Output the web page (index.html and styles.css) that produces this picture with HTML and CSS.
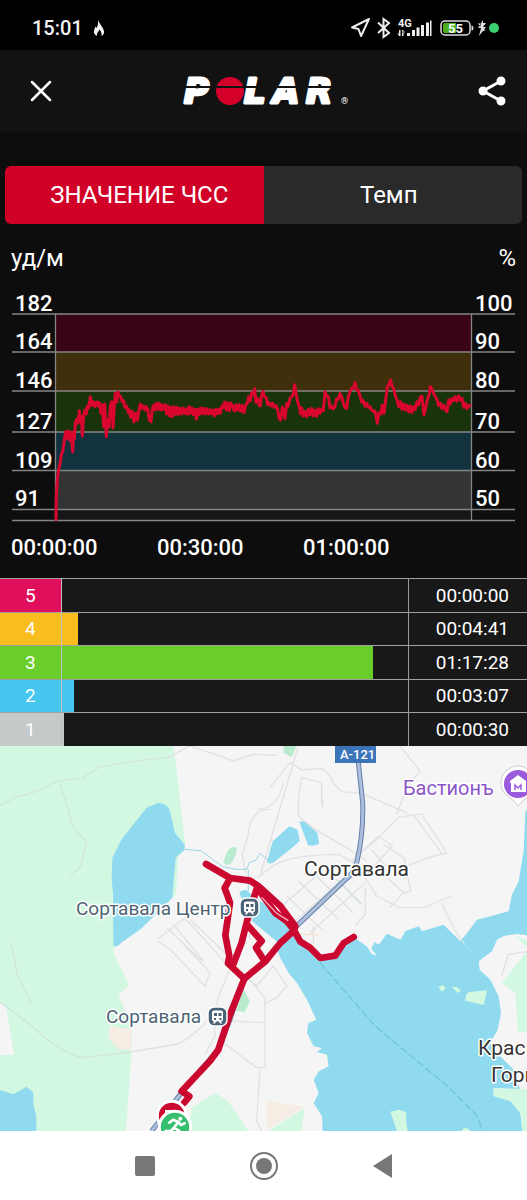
FILE: index.html
```html
<!DOCTYPE html>
<html lang="ru">
<head>
<meta charset="utf-8">
<meta name="viewport" content="width=device-width, initial-scale=1">
<title>Polar</title>
<link rel="stylesheet" href="styles.css">
</head>
<body>
<div class="status">
  <span class="clock">15:01</span>
  <svg class="flame" width="12" height="18" viewBox="0 0 12 18"><path fill="#f2f2f2" d="M5 1C6 4 10 8 11 12c.5 2-.5 4-2.500 5 .5-2.500-.5-4.500-2-6.500C5.500 13 3.500 14 4 17 1.500 16 .5 14 1 11.500 1.500 10 2 9 2.500 7.500L3.800 9C5 6.500 5.300 4 5 1z"/></svg>
  <svg class="indicators" width="150" height="24" viewBox="0 0 150 24">
    <path d="M2 11.500L19 3l-8 17-2.500-7z" fill="none" stroke="#eee" stroke-width="2" stroke-linejoin="round"/>
    <path d="M28 6.500l11 10.500-5.500 4V3l5.500 4-11 10" fill="none" stroke="#eee" stroke-width="2"/>
    <text class="net" x="48" y="11">4G</text>
    <path fill="#eee" d="M49 14h1.500v6H49zM52 14h1.500v6H52zM47.500 17.500h3L49 20zM52 16.500h3L53.500 14zM57 17h3v3h-3zM62 14h3v6h-3zM66.500 11.500h3V20h-3zM71 9h3v11h-3zM76 6.500h3V20h-3zM80 4.500h1.500V20H80z"/>
    <rect x="91" y="5" width="29" height="14" rx="4" fill="none" stroke="#ddd" stroke-width="1.500"/>
    <path fill="#4caf1e" d="M95 7h11v10H95a2 2 0 0 1-2-2V9a2 2 0 0 1 2-2z"/><path fill="#ddd" d="M121.500 9.500q2 0 2 2.500t-2 2.500z"/>
    <text class="battery" x="98" y="17">55</text>
    <path fill="#ddd" d="M133 4l-5 8h3l-2 8 7-9h-3l3-4h-3zM128 7l3 1-1 3zM136 14l-4-1-1 3z"/>
    <circle cx="144" cy="12" r="5" fill="#3bd16f"/>
  </svg>
</div>
<header class="header">
  <button class="icon-button" aria-label="Закрыть"><svg width="22" height="22" viewBox="0 0 22 22"><path d="M2 2l18 18M20 2L2 20" stroke="#fff" stroke-width="2.500" stroke-linecap="round"/></svg></button>
  <svg class="logo" width="180" height="56" viewBox="0 0 180 56">
    <g class="wordmark"><text x="7" y="40">P</text><text x="67" y="40">L</text><text x="96" y="40">A</text><text x="129" y="40">R</text></g>
    <circle cx="53" cy="28" r="14" fill="#d4002a"/>
    <path d="M0 24h180" stroke="#121212" stroke-width="2"/>
    <text class="reg" x="164" y="41">®</text>
  </svg>
  <button class="icon-button" aria-label="Поделиться"><svg width="28" height="30" viewBox="0 0 28 30"><g fill="#fff" stroke="#fff" stroke-width="3"><path d="M23 5L5 15l18 10" fill="none"/><circle cx="5" cy="15" r="3"/><circle cx="23" cy="5" r="3"/><circle cx="23" cy="25" r="3"/></g></svg></button>
</header>
<main>
<div class="tabs">
  <button class="tab active">ЗНАЧЕНИЕ ЧСС</button>
  <button class="tab">Темп</button>
</div>
<div class="units"><span>уд/м</span><span>%</span></div>
<svg class="chart" viewBox="0 0 527 298" role="img" aria-label="График ЧСС">
  <rect x="56" y="34" width="415" height="38" fill="#390318"/>
  <rect x="56" y="72" width="415" height="39" fill="#3f2f0b"/>
  <rect x="56" y="111" width="415" height="41" fill="#19330d"/>
  <rect x="56" y="152" width="415" height="38" fill="#12323d"/>
  <rect x="56" y="190" width="415" height="40" fill="#333434"/>
  <rect x="56" y="230" width="415" height="10" fill="#161616"/>
  <path d="M12 34h503M12 72h503M12 111h503M12 152h503M12 190.500h503M12 229.500h503M12 240.500h503M55.500 34v206M471.500 34v206" fill="none" stroke="#858585" stroke-width="1.300"/>
  <g class="axis">
    <text x="15" y="31">182</text><text x="15" y="69">164</text><text x="15" y="108">146</text><text x="15" y="149">127</text><text x="15" y="188">109</text><text x="15" y="226">91</text>
    <text x="475" y="31">100</text><text x="475" y="69">90</text><text x="475" y="108">80</text><text x="475" y="149">70</text><text x="475" y="188">60</text><text x="475" y="226">50</text>
    <text x="11" y="275">00:00:00</text><text x="157" y="275">00:30:00</text><text x="303" y="275">01:00:00</text>
  </g>
  <g transform="scale(.33333)">
    <polyline fill="none" stroke="#d9062f" stroke-width="9" stroke-linejoin="round" points="168,722 169,650 172,595 176,570 180,550 184,525 189,510 193,480 197,455 200,475 204,453 208,480 211,456 214,475 218,515 221,455 223,477 226,430 230,418 233,430 238,392 241,425 244,410 247,468 251,405 255,390 259,402 262,378 266,384 271,350 275,376 280,365 284,380 290,366 294,378 298,368 303,400 307,375 311,440 314,372 319,470 323,420 327,440 331,378 335,365 339,444 343,380 346,340 351,365 354,336 358,348 362,350 367,365 371,362 375,382 380,378 385,398 389,390 392,412 397,395 402,426 407,400 412,420 416,395 421,372 425,385 430,378 435,390 439,380 443,387 448,420 453,425 457,385 461,376 465,390 469,370 474,388 478,370 483,390 487,375 491,388 495,374 500,402 504,378 509,408 513,382 517,410 522,380 526,403 531,382 535,404 540,385 545,402 549,384 554,400 558,387 562,403 567,380 571,400 576,384 580,404 585,388 589,417 593,388 598,404 602,384 607,400 611,385 615,402 620,386 625,402 630,389 634,402 639,390 643,408 648,388 652,402 657,387 661,400 666,378 670,382 674,366 679,390 684,368 688,392 693,370 698,378 703,393 708,375 712,390 717,374 722,394 727,376 732,398 737,375 742,370 746,350 751,362 755,338 760,345 764,326 768,367 773,355 777,375 781,378 785,345 789,334 794,350 799,354 803,374 808,368 813,378 818,370 823,382 828,377 833,388 837,415 842,420 847,382 851,390 855,416 860,370 865,378 870,355 875,350 879,345 884,314 889,345 893,366 898,380 902,402 906,385 910,408 915,395 920,410 925,388 930,405 935,385 940,408 945,390 950,409 955,386 960,400 965,387 970,392 975,335 980,348 985,350 990,384 995,378 1000,387 1005,380 1010,356 1015,358 1020,340 1025,350 1030,370 1035,383 1040,385 1045,350 1050,335 1055,325 1060,325 1065,308 1070,330 1075,332 1080,347 1085,366 1090,362 1095,379 1100,370 1105,382 1110,380 1115,390 1120,395 1125,393 1132,430 1137,398 1142,402 1147,376 1152,400 1157,360 1162,320 1168,312 1171,300 1176,318 1181,325 1186,348 1191,360 1196,380 1201,365 1206,388 1211,372 1216,390 1221,375 1226,396 1231,378 1236,398 1241,380 1246,388 1251,365 1256,375 1261,350 1266,349 1272,405 1277,383 1282,360 1287,345 1291,320 1296,328 1301,340 1306,350 1311,358 1316,377 1321,370 1326,386 1331,375 1336,388 1341,395 1346,360 1351,372 1356,356 1361,362 1366,350 1371,364 1376,348 1381,360 1386,355 1391,382 1396,370 1401,386 1406,376 1414,378"/>
  </g>
</svg>
<table class="zones">
  <tr><th scope="row" class="z5">5</th><td class="track"><div class="bar z5" style="width:0%"></div></td><td class="time">00:00:00</td></tr>
  <tr><th scope="row" class="z4">4</th><td class="track"><div class="bar z4" style="width:4.7%"></div></td><td class="time">00:04:41</td></tr>
  <tr><th scope="row" class="z3">3</th><td class="track"><div class="bar z3" style="width:90%"></div></td><td class="time">01:17:28</td></tr>
  <tr><th scope="row" class="z2">2</th><td class="track"><div class="bar z2" style="width:3.7%"></div></td><td class="time">00:03:07</td></tr>
  <tr><th scope="row" class="z1">1</th><td class="track"><div class="bar z1" style="width:0.7%"></div></td><td class="time">00:00:30</td></tr>
</table>
<svg class="map" viewBox="0 0 527 385" role="img" aria-label="Маршрут на карте">
  <rect width="527" height="385" fill="#f5f5f5"/>
  <g transform="scale(.33333)">
    <path fill="#d3f8e2" d="M0 0H520L532 90 555 290 535 330 528 445 345 605 340 620 388 718 355 745 370 780 395 840V910L378 1155H0V926H42L18 780 0 768z"/>
    <path fill="#f5f5f5" d="M0 768L14 780 42 926H0z"/>
    <path fill="#f5ede3" d="M328 840l66 10v60l-36 2-32-35zM800 1065l115 17-115 70z"/>
    <path fill="#d3f8e2" d="M575 1085l70-44 40 25 60 90H565zM805 1155l110-70-12 70z"/>
    <path fill="#b9eccf" d="M680 320q12-22 30-15 2 20-15 45-15 12-25 0zM850 0h39l-14 34-24-14zM730 730l20 35-16 34-26-5z"/>
    <path fill="#8fdaee" d="M474 171q28 0 36 25l15 65 30 36-2 16-26 22-10 120-92 92-75 53h-10l-1-155-4-50 2-60 28-55 75-95zM345 581h29l-20 18q-14-2-9-18zM0 1032l40 13 40-23 20 18v32l9 40v43H0z"/>
    <path fill="#8fdaee" d="M718 440q18-18 30 0l62 45 65 65-40 40-85-70zM800 345l14-5-2 15zM800 350l18-64 50-45 25 10 6 34-20 18-60 48zM898 228l14-3 40 35 6 34-20 5-14-1z"/>
    <path fill="#8fdaee" d="M1581 196L1576 196 1571 316 1556 406 1536 446 1526 496 1471 511 1431 521 1401 561 1381 586 1331 536 1266 556 1256 541 1216 556 1201 581 1161 563 1136 596 1124 588 1114 608 1131 630 1115 624 1100 601 1060 573 1031 591 1006 629 961 636 926 616 881 556 830 605 841 636 866 681 891 711 921 761 949 821 925 832 921 860 941 901 966 906 951 918 981 926 986 961 956 976 941 1001 956 1041 941 1071 966 1111 968 1155H1581z"/>
    <path fill="#f5f5f5" d="M1581 568l-30-4-40 6-20 11-15 35-40 30 3 25 32 30 25 50 7 50-10 50-22 40 29 39 40 40 20 60-79-4v24l50 15 30 36 7 54h13z"/>
    <path fill="#d3f8e2" d="M1581 615l-75 96 40 30 8 120 27-6zM1545 571l36 12v20zM1407 738l54-5-10 44-55-13 2-17zM1355 722l16 2 12 10-10 7zM1315 722l13-5 10 8-12 13zM1171 1097l26-6 22 8-1 24 5 32h-32zM1385 1155q12-20 25 0zM1480 1028l101 0v127h-14l-6-54-30-36-50-15z"/>
    <g fill="none" stroke="#e1e1e4" stroke-width="4">
      <path stroke="#d2e5dc" d="M0 178l50-25q60-12 110-43 40-12 85-12l50-34q100-20 210-30M180 110l40 135 40 45-20 75-30 22M30 590l15 50 5 45 45 90M0 768l100 75q80 80 150 92l140-17"/>
      <path d="M505 34l65-35 50 18 80 28 60-20 70 3M390 918l145-24q65-35 100-90M895 0L780 390M810 125l60-75 35 22 60-5q30 20 35 45l25 25 60 5 140 60M1195 215l-60 60-80 70M1195 215l70-12 75 118-50 12-70 27-60 2-45-50M1240 205l85 117M968 160v30M905 95l60 15v70M905 95l-10 70v45l50 40 95 55 60 40M771 395l55-40q50-28 190-30l70 40M1200 0l60 75-40 50-30 80M750 581v-50l45-100M810 190q-60 0-65 75l-18 60 10 55M771 190q60 0 80-80M1090 385l40 65 70 35 70 0 85-35M1325 470l40 85 30 40M1096 425v80l-30 35M1150 295l62 40 20 100-20 5-90-80 55-60-40-30-65 60M1210 440l-40 45"/>
      <path d="M840 485l115-100M880 530l165-145M930 560l165-150M860 450l110 105M895 405l120 115M940 380l120 120"/>
      <path stroke="#cbdddd" d="M1010 400l75 75"/>
      <path d="M470 581l85-65 140 155M500 545l105 100M520 535l90 110M570 520l120 115M475 585l35 25 105 110 15-40-80-85M690 670l-30 70-15 50v80l-30 55M740 690l55 65v210l-25 0-100-75M700 660l70 60 50-60 40 60-30 35-40 20M690 825l100 5M780 970l-10 155 15 30M940 540v55M1505 690l20-65 56-8"/>
    </g>
    <path fill="none" stroke="#f2e6d4" stroke-width="5" d="M895 565h60"/>
    <path fill="none" stroke="#9dd5e3" stroke-width="3" d="M553 310l50 4 65 48 40 8h32l8-20 20-8 12-20 25 20h20M745 370v65"/>
    <path fill="none" stroke="#72c4da" stroke-width="4" stroke-dasharray="24 8" d="M960 650l165 190 90 75 130 108 80 80q15 20 20 52"/>
    <path fill="none" stroke="#a7e5f2" stroke-width="3" stroke-dasharray="8 6" d="M891 711l50-36M1385 581l50 65"/>
    <g fill="none" stroke="#657fab" stroke-width="15"><path d="M1074 40l14 130q3 90-17 176-8 35-35 55L885 545"/><path d="M720 730l-30 90-35 90-110 130-90 115"/></g>
    <g fill="none" stroke="#acbfdc" stroke-width="9"><path d="M1074 40l14 130q3 90-17 176-8 35-35 55L885 545"/><path d="M720 730l-30 90-35 90-110 130-90 115"/></g>
    <g fill="none" stroke="#ca0830" stroke-width="20" stroke-linejoin="round" stroke-linecap="round">
      <path d="M618 354L690 396 750 404 775 420 841 480 886 541 881 555 841 591 796 646 733 698 684 652 688 630 676 568 690 470 674 426 690 398"/>
      <path d="M771 425L765 445 745 510 725 590 700 655M740 535L785 585 768 605 790 640M771 425L826 501 861 526 881 551 901 587 930 605 961 636 1006 629 1031 591 1061 573"/>
      <path d="M733 698L690 806 672 860 655 911 630 945 545 1036 568 1051 552 1071"/>
    </g>
    <path d="M785 454l45 48 35 22" stroke="#f5b6c4" stroke-width="4" fill="none"/>
    <circle cx="515" cy="1109" r="43" fill="#ca0830" stroke="#fff" stroke-width="9"/><path d="M495 1092h38v17h-38z" fill="#fff"/>
    <circle cx="525" cy="1143" r="47" fill="#35bf6e" stroke="#fff" stroke-width="9"/>
    <g fill="none" stroke="#fff" stroke-width="8" stroke-linecap="round" stroke-linejoin="round"><path d="M535 1128l-13 17 16 10-5 17M522 1145l-9 10h-16M535 1128l-16-7-11 9M535 1128l8 9 11-5"/></g><circle cx="541" cy="1118" r="6" fill="#fff"/>
  </g>
  <g id="station-centre">
    <rect x="240" y="152" width="19" height="19" rx="6" fill="#4b6376" stroke="#fff" stroke-width="1.500"/><path fill="#fff" d="M246 155.500h7q2 0 2 2v7q0 2-2 2l1 2h-2l-1-2h-3l-1 2h-2l1-2q-2 0-2-2v-7q0-2 2-2z"/><path fill="#4b6376" d="M246 158h3v3h-3zM250.500 158h3v3h-3zM246 163h2v2h-2zM251.500 163h2v2h-2z"/>
  </g>
  <use href="#station-centre" x="-32" y="109"/>
  <rect x="335" y="0" width="41" height="17" fill="#3b74b9"/>
  <path fill="#fff" stroke="#ccc" stroke-width="1" d="M518 60q-3-5-9-9-8-5-8-14a17 17 0 0 1 34 0q0 10-9 15z"/>
  <circle cx="518" cy="38" r="14" fill="#9a5bdc"/><path fill="#fff" d="M510 35l8-6 8 6v2h-16zM511 37h15v9h-15z"/><path d="M515 44v-5l3 3 3-3v5" fill="none" stroke="#9a5bdc" stroke-width="1.500"/>
  <text class="road" x="340" y="13">А-121</text>
  <g class="place">
    <text class="poi" x="403" y="49">Бастионъ</text>
    <text class="town" x="304" y="130">Сортавала</text>
    <text x="76" y="169">Сортавала Центр</text>
    <text x="106" y="277">Сортавала</text>
    <text class="town" x="478" y="309">Красная</text>
    <text class="town" x="491" y="336">Горка</text>
  </g>
</svg>
</main>
<nav class="navbar">
  <button aria-label="Недавние"><svg width="22" height="22"><rect x="1" y="1" width="20" height="20" rx="2" fill="#777"/></svg></button>
  <button aria-label="Домой"><svg width="30" height="30"><circle cx="15" cy="15" r="13" fill="none" stroke="#777" stroke-width="2"/><circle cx="15" cy="15" r="8" fill="#777"/></svg></button>
  <button aria-label="Назад"><svg width="22" height="26"><path d="M1 13L20 1v24z" fill="#777"/></svg></button>
</nav>
</body>
</html>
```
FILE: styles.css
```css
* { box-sizing: border-box; }
body { margin: 0; background: #0d0d0d; color: #fff; font-family: Roboto, "Noto Sans", sans-serif; font-size: 24px; }
button { border: 0; padding: 0; margin: 0; background: none; color: inherit; font: inherit; }
svg { display: block; overflow: hidden; }
.status { display: flex; align-items: center; height: 50px; padding: 6px 27px 0 32px; background: #000; }
.clock { font-size: 20px; font-weight: 500; color: #f2f2f2; }
.flame { margin-left: 10px; }
.indicators { margin-left: auto; }
.net { font-size: 11px; font-weight: 700; fill: #eee; }
.battery { font-size: 13px; font-weight: 700; fill: #fff; }
.header { display: flex; align-items: center; justify-content: space-between; height: 82px; padding: 0 20px 0 26px; background: #121212; }
.icon-button { display: grid; place-items: center; width: 30px; height: 30px; }
.wordmark { font-family: "DejaVu Sans", sans-serif; font-size: 34px; font-weight: 700; font-style: italic; fill: #fff; stroke: #fff; stroke-width: 3px; stroke-linejoin: round; }
.reg { font-size: 9px; fill: #fff; }
.tabs { display: grid; grid-template-columns: 1fr 1fr; margin: 34px 5px 0; border-radius: 6px; overflow: hidden; }
.tab { height: 58px; padding-right: 8px; background: #2a2a2a; }
.tab.active { background: #d00027; padding: 0 0 0 10px; }
.units { display: flex; justify-content: space-between; height: 56px; padding: 20px 11px 0; line-height: 28px; }
.chart { width: 100%; height: auto; }
.axis { font-size: 22px; font-weight: 500; fill: #fff; }
.zones { width: 100%; height: 168px; table-layout: fixed; border-collapse: collapse; font-size: 19px; background: #181818; }
.zones tr { border-top: 1px solid #a0a0a0; }
.zones th { width: 61px; padding: 0; font-weight: 400; border-right: 1px solid #c0c0c0; }
.zones td { padding: 0; }
.zones .track { height: 30px; }
.bar { height: 100%; }
.zones .time { width: 119px; padding-right: 18px; border-left: 1px solid #999; text-align: right; }
.z5 { background: #df0f5b; }
.z4 { background: #f8bd1e; }
.z3 { background: #69cd2b; }
.z2 { background: #45c6ee; }
.z1 { background: #c4c9c9; }
.map { width: 100%; height: auto; }
.place { font-size: 19px; fill: #4d6373; stroke: #fff; stroke-width: 3px; paint-order: stroke; stroke-linejoin: round; }
.place .town { font-size: 21px; fill: #333; }
.place .poi { font-size: 20px; fill: #8b55c8; }
.road { font-size: 13px; font-weight: 500; fill: #fff; }
.navbar { display: flex; justify-content: center; align-items: center; gap: 89px; height: 69px; background: #fff; }
.navbar button { display: grid; place-items: center; width: 30px; height: 30px; }
```
